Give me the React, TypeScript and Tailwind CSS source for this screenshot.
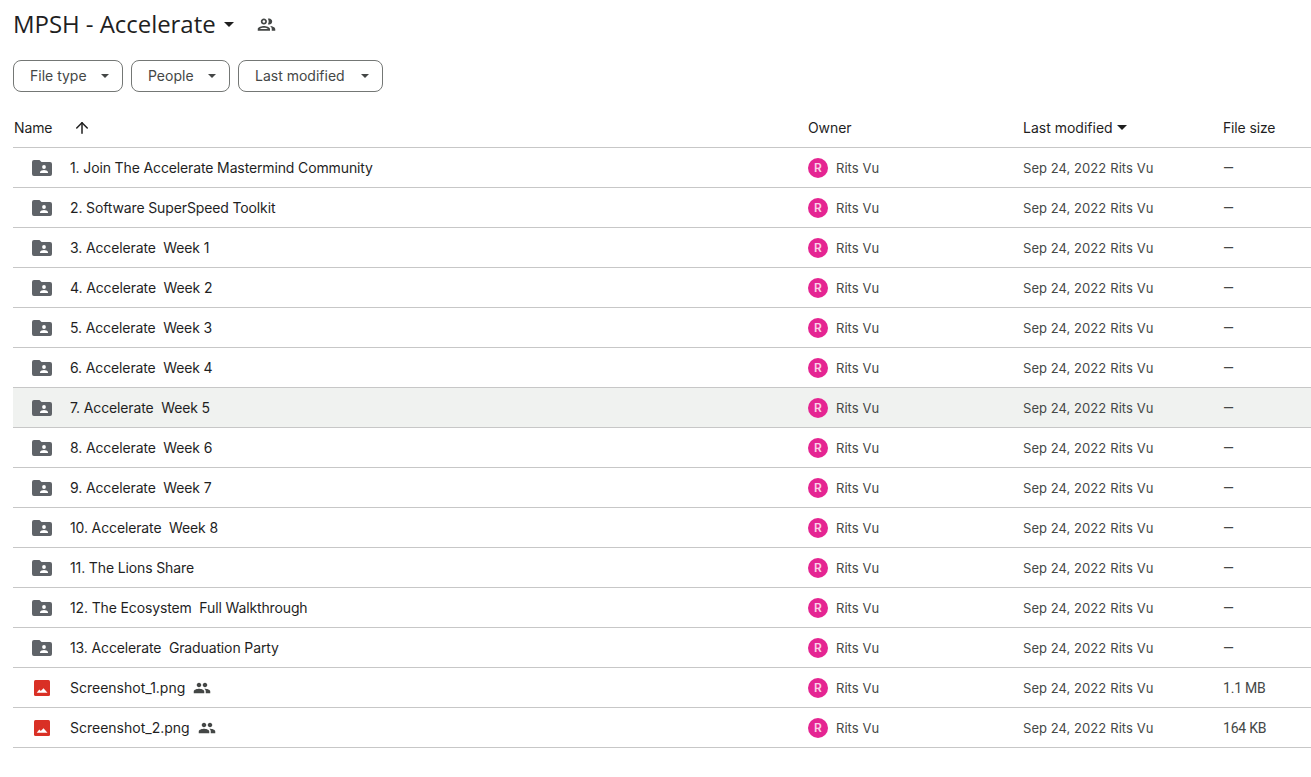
import { ArrowUp } from "lucide-react"

const rows = [
  { name: "1. Join The Accelerate Mastermind Community" },
  { name: "2. Software SuperSpeed Toolkit" },
  { name: "3. Accelerate\u00a0 Week 1" },
  { name: "4. Accelerate\u00a0 Week 2" },
  { name: "5. Accelerate\u00a0 Week 3" },
  { name: "6. Accelerate\u00a0 Week 4" },
  { name: "7. Accelerate\u00a0 Week 5", hover: true },
  { name: "8. Accelerate\u00a0 Week 6" },
  { name: "9. Accelerate\u00a0 Week 7" },
  { name: "10. Accelerate\u00a0 Week 8" },
  { name: "11. The Lions Share" },
  { name: "12. The Ecosystem\u00a0 Full Walkthrough" },
  { name: "13. Accelerate\u00a0 Graduation Party" },
  { name: "Screenshot_1.png", image: true, size: "1.1 MB" },
  { name: "Screenshot_2.png", image: true, size: "164 KB" },
]

function Caret({ className }: { className: string }) {
  return (
    <svg viewBox="0 0 10 5" className={className} fill="currentColor">
      <path d="M0 0l5 5 5-5z" />
    </svg>
  )
}

function SharedFolder() {
  return (
    <svg viewBox="0 0 20 16" className="h-4 w-5 text-[#5f6368]" fill="currentColor">
      <path d="M2 0h5.5l2 2H18a2 2 0 0 1 2 2v10a2 2 0 0 1-2 2H2a2 2 0 0 1-2-2V2a2 2 0 0 1 2-2z" />
      <circle cx="12" cy="7" r="1.9" fill="#fff" />
      <path d="M8 12.2c0-1.4 2.6-2.2 4-2.2s4 .8 4 2.2V13H8z" fill="#fff" />
    </svg>
  )
}

function ImageFile() {
  return (
    <svg viewBox="0 0 16 16" className="h-4 w-4" fill="#d93025">
      <rect width="16" height="16" rx="1.5" />
      <path d="M2.7 12.7l2.6-3.2 1.5 1.5 2.7-2.8 4 4.5z" fill="#fff" />
    </svg>
  )
}

function People({ className }: { className: string }) {
  return (
    <svg viewBox="0 0 24 24" className={className} fill="currentColor">
      <path d="M16 11c1.66 0 2.99-1.34 2.99-3S17.66 5 16 5s-3 1.34-3 3 1.34 3 3 3zm-8 0c1.66 0 2.99-1.34 2.99-3S9.66 5 8 5 5 6.34 5 8s1.34 3 3 3zm0 2c-2.33 0-7 1.17-7 3.5V19h14v-2.5C15 14.17 10.33 13 8 13zm8 0c-.29 0-.62.02-.97.05 1.16.84 1.97 1.97 1.97 3.45V19h6v-2.5c0-2.33-4.67-3.5-7-3.5z" />
    </svg>
  )
}

function PeopleOutline() {
  return (
    <svg viewBox="0 0 24 24" className="block h-[21px] w-[21px] text-[#444746]" fill="currentColor">
      <path d="M9 13.75c-2.34 0-7 1.17-7 3.5V19h14v-1.75c0-2.33-4.66-3.5-7-3.5zM4.34 17c.84-.58 2.87-1.25 4.66-1.25s3.82.67 4.66 1.25H4.34zM9 12c1.93 0 3.5-1.57 3.5-3.5S10.93 5 9 5 5.5 6.57 5.5 8.5 7.07 12 9 12zm0-5c.83 0 1.5.67 1.5 1.5S9.83 10 9 10s-1.5-.67-1.5-1.5S8.17 7 9 7zm7.04 6.81c1.16.84 1.96 1.96 1.96 3.44V19h4v-1.75c0-2.02-3.5-3.17-5.96-3.44zM15 12c1.93 0 3.5-1.57 3.5-3.5S16.93 5 15 5c-.54 0-1.04.13-1.5.35.63.89 1 1.98 1 3.15s-.37 2.26-1 3.15c.46.22.96.35 1.5.35z" />
    </svg>
  )
}

function Filter({ label, width }: { label: string; width: string }) {
  return (
    <button className={`flex h-8 items-center justify-between rounded-lg border border-[#747775] pl-4 pr-[13px] text-sm text-[#444746] ${width}`}>
      <span>{label}</span>
      <Caret className="h-1 w-2 text-[#444746]" />
    </button>
  )
}

export default function App() {
  return (
    <div className="h-[777px] w-[1311px] overflow-hidden bg-white pl-[13px] font-['Inter',sans-serif] text-[#1f1f1f]">
      <div className="flex h-[48px] items-center">
        <h1 className="font-['Open_Sans',sans-serif] text-[24px] leading-8 tracking-[-0.05px]">MPSH - Accelerate</h1>
        <Caret className="ml-2 h-[5px] w-[10px] text-[#1f1f1f]" />
        <span className="ml-[22px]">
          <PeopleOutline />
        </span>
      </div>

      <div className="mt-[12px] flex gap-2">
        <Filter label="File type" width="w-[110px]" />
        <Filter label="People" width="w-[99px]" />
        <Filter label="Last modified" width="w-[145px]" />
      </div>

      <div className="mt-[16px] flex h-[40px] items-center border-b border-[#c7c7c7] text-sm">
        <div className="flex w-[795px] items-center pl-[1px] tracking-[-0.1px]">
          <span>Name</span>
          <ArrowUp className="ml-[21px] h-[18px] w-[18px]" strokeWidth={2} />
        </div>
        <div className="w-[215px] tracking-[-0.1px]">Owner</div>
        <div className="flex w-[200px] items-center">
          Last modified
          <Caret className="ml-1 h-[5px] w-[10px]" />
        </div>
        <div className="tracking-[-0.15px]">File size</div>
      </div>

      {rows.map(row => (
        <div key={row.name} className={`flex h-[40px] items-center border-b border-[#c7c7c7] ${row.hover ? "bg-[#f0f2f0]" : ""}`}>
          <div className="flex w-[795px] items-center">
            <span className="flex w-[57px] justify-center pl-[1px]">
              {row.image ? <ImageFile /> : <SharedFolder />}
            </span>
            <span className={row.image ? "text-sm" : "text-sm tracking-[-0.13px]"}>{row.name}</span>
            {row.image && <People className="ml-2 h-[18px] w-[18px] text-[#444746]" />}
          </div>
          <div className="flex w-[215px] items-center text-[#444746]">
            <span className="flex h-5 w-5 items-center justify-center rounded-full bg-[#e52592] text-xs font-semibold text-[#fbd0e6]">R</span>
            <span className="ml-2 pt-[2px] text-[13px] tracking-[0.05px]">Rits Vu</span>
          </div>
          <div className="flex w-[200px] gap-1 pt-[2px] text-[13px] tracking-[0.05px] text-[#444746]">
            <span>Sep 24, 2022</span>
            <span>Rits Vu</span>
          </div>
          <div className="font-['Roboto',sans-serif] text-sm tracking-[-0.2px] text-[#444746]">{row.size ?? "—"}</div>
        </div>
      ))}
    </div>
  )
}
